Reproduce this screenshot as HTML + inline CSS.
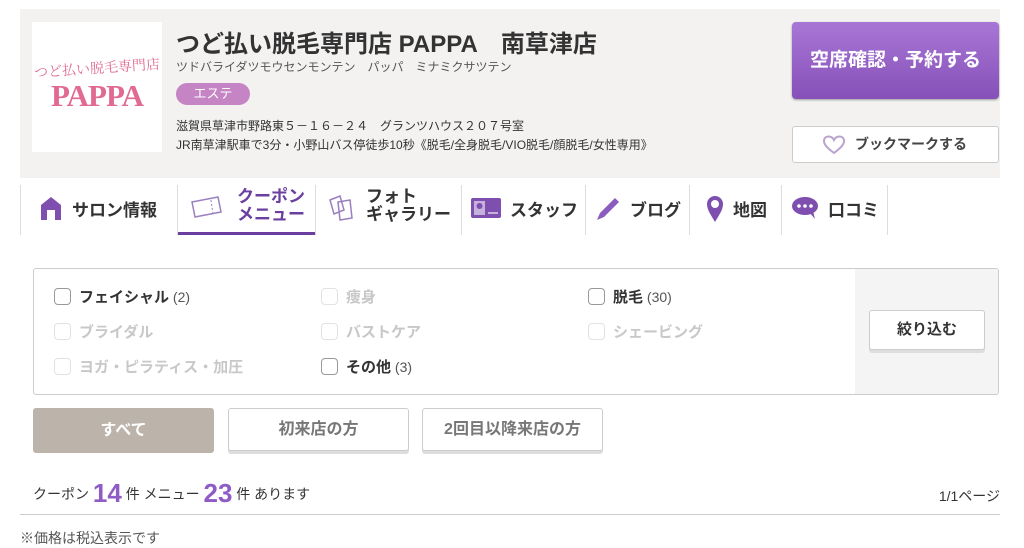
<!DOCTYPE html>
<html><head><meta charset="utf-8"><style>
*{box-sizing:border-box;margin:0;padding:0}
body{width:1024px;height:536px;overflow:hidden;background:#fff;font-family:"Liberation Sans","Noto Sans CJK JP",sans-serif;color:#333;position:relative}
.a{position:absolute}
.hdr{left:20px;top:9px;width:980px;height:169px;background:#f3f2f1}
.logo{left:32px;top:22px;width:130px;height:130px;background:#fff;text-align:center;color:#e06a92}
.b{font-weight:bold}
.cb{width:17px;height:17px;border:1px solid #999;border-radius:4px;background:#fff}
.cb.d{border-color:#e2e2e2}
.lbl{font-size:15px;font-weight:bold;color:#333;white-space:nowrap}
.lbl.d{color:#c8c8c8}
.lbl span{font-weight:normal;color:#555;font-size:14px}
.sep{width:1px;height:50px;background:#ddd;top:185px}
.nav{font-size:17px;font-weight:bold;color:#333;white-space:nowrap}
.btn{border:1px solid #ccc;border-radius:3px;background:#fff;box-shadow:0 3px 0 #ddd;text-align:center;font-weight:bold;color:#777;font-size:16px}
</style></head><body>
<div class="a hdr"></div>
<div class="a logo"><div style="margin-top:36px;font-size:14px;font-family:'Noto Serif CJK SC',serif;transform:rotate(-4deg)">つど払い脱毛専門店</div><div style="font-family:'Liberation Serif',serif;font-weight:bold;font-size:31px;letter-spacing:-1px;margin-top:0">PAPPA</div></div>
<div class="a b" style="left:176px;top:24px;font-size:24px;color:#333;white-space:nowrap">つど払い脱毛専門店 PAPPA　南草津店</div>
<div class="a" style="left:176px;top:58px;font-size:12px;color:#555;white-space:nowrap">ツドバライダツモウセンモンテン　パッパ　ミナミクサツテン</div>
<div class="a" style="left:176px;top:83px;width:74px;height:22px;border-radius:11px;background:#c584c4;color:#fff;font-size:13px;text-align:center;line-height:22px">エステ</div>
<div class="a" style="left:176px;top:117px;font-size:12px;color:#333;white-space:nowrap;line-height:19px">滋賀県草津市野路東５－１６－２４　グランツハウス２０７号室<br>JR南草津駅車で3分・小野山バス停徒歩10秒《脱毛/全身脱毛/VIO脱毛/顔脱毛/女性専用》</div>
<div class="a" style="left:792px;top:22px;width:207px;height:77px;border-radius:4px;background:linear-gradient(#a877d6,#8650b8);color:#fff;font-size:19px;font-weight:bold;text-align:center;line-height:77px;box-shadow:0 1px 2px #999">空席確認・予約する</div>
<div class="a" style="left:792px;top:126px;width:207px;height:37px;border:1px solid #ccc;border-radius:3px;background:#fff;font-size:14px;font-weight:bold;color:#444;line-height:35px;padding-left:62px">ブックマークする</div>
<svg class="a" style="left:822px;top:135px" width="24" height="20" viewBox="0 0 24 20"><path d="M12 18 C4 12 2 9 2 6 C2 3 4 1.5 6.5 1.5 C9 1.5 11 3 12 5 C13 3 15 1.5 17.5 1.5 C20 1.5 22 3 22 6 C22 9 20 12 12 18Z" fill="none" stroke="#b9a3cf" stroke-width="2"/></svg>

<div class="a sep" style="left:20px"></div><div class="a sep" style="left:177px"></div><div class="a sep" style="left:315px"></div><div class="a sep" style="left:461px"></div><div class="a sep" style="left:585px"></div><div class="a sep" style="left:689px"></div><div class="a sep" style="left:781px"></div><div class="a sep" style="left:887px"></div>
<div class="a" style="left:178px;top:232px;width:137px;height:3px;background:#6b3fa0"></div>
<svg class="a" style="left:40px;top:196px" width="22" height="25"><path d="M1 24V9L11 1L21 9V24H15V14H7V24Z" fill="#7e4fae"/></svg>
<div class="a nav" style="left:72px;top:196px">サロン情報</div>
<svg class="a" style="left:190px;top:194px" width="34" height="26"><path d="M2 8L28 3L31 18L5 23Z" fill="none" stroke="#9a80bf" stroke-width="1.5"/><path d="M21 6L23 20" stroke="#9a80bf" stroke-dasharray="2 2"/></svg>
<div class="a nav" style="left:237px;top:188px;color:#6b3fa0;line-height:18px">クーポン<br>メニュー</div>
<svg class="a" style="left:328px;top:194px" width="26" height="28"><path d="M2 6L12 2L16 16L6 20Z M10 8L22 6L24 24L12 26Z" fill="#fff" stroke="#9a80bf" stroke-width="1.5"/></svg>
<div class="a nav" style="left:366px;top:188px;line-height:18px">フォト<br>ギャラリー</div>
<svg class="a" style="left:470px;top:196px" width="32" height="24"><rect x="1" y="2" width="30" height="20" rx="2" fill="#7e4fae"/><rect x="4" y="5" width="11" height="14" fill="#c5b1dc"/><circle cx="9.5" cy="10" r="3" fill="#7e4fae"/><rect x="18" y="16" width="10" height="2" fill="#c5b1dc"/></svg>
<div class="a nav" style="left:510px;top:196px">スタッフ</div>
<svg class="a" style="left:595px;top:196px" width="26" height="26"><path d="M20 2L24 6L9 21L2 24L5 17Z" fill="#8a5cc0"/></svg>
<div class="a nav" style="left:630px;top:196px">ブログ</div>
<svg class="a" style="left:706px;top:195px" width="18" height="28"><path d="M9 27C5 20 1 15 1 9A8 8 0 0 1 17 9C17 15 13 20 9 27Z" fill="#7e4fae"/><circle cx="9" cy="9" r="4" fill="#fff"/></svg>
<div class="a nav" style="left:733px;top:196px">地図</div>
<svg class="a" style="left:791px;top:196px" width="30" height="24"><ellipse cx="14" cy="10" rx="13" ry="9" fill="#7e4fae"/><path d="M18 16L24 23L22 15Z" fill="#7e4fae"/><circle cx="8" cy="10" r="1.8" fill="#fff"/><circle cx="14" cy="10" r="1.8" fill="#fff"/><circle cx="20" cy="10" r="1.8" fill="#fff"/></svg>
<div class="a nav" style="left:828px;top:196px">口コミ</div>

<div class="a" style="left:33px;top:268px;width:966px;height:127px;border:1px solid #ccc;border-radius:3px;background:#fff;overflow:hidden"><div style="position:absolute;left:821px;top:0;width:145px;height:127px;background:#f4f4f4"></div></div>
<div class="a cb" style="left:54px;top:288px"></div><div class="a lbl" style="left:79px;top:286px">フェイシャル<span> (2)</span></div>
<div class="a cb d" style="left:321px;top:288px"></div><div class="a lbl d" style="left:346px;top:286px">痩身</div>
<div class="a cb" style="left:588px;top:288px"></div><div class="a lbl" style="left:613px;top:286px">脱毛<span> (30)</span></div>
<div class="a cb d" style="left:54px;top:323px"></div><div class="a lbl d" style="left:79px;top:321px">ブライダル</div>
<div class="a cb d" style="left:321px;top:323px"></div><div class="a lbl d" style="left:346px;top:321px">バストケア</div>
<div class="a cb d" style="left:588px;top:323px"></div><div class="a lbl d" style="left:613px;top:321px">シェービング</div>
<div class="a cb d" style="left:54px;top:358px"></div><div class="a lbl d" style="left:79px;top:356px">ヨガ・ピラティス・加圧</div>
<div class="a cb" style="left:321px;top:358px"></div><div class="a lbl" style="left:346px;top:356px">その他<span> (3)</span></div>
<div class="a btn" style="left:869px;top:310px;width:116px;height:40px;line-height:38px;color:#333;font-size:15px">絞り込む</div>

<div class="a" style="left:33px;top:408px;width:181px;height:45px;border-radius:3px;background:#bcb3aa;color:#fff;font-weight:bold;font-size:16px;text-align:center;line-height:45px">すべて</div>
<div class="a btn" style="left:228px;top:408px;width:181px;height:43px;line-height:41px">初来店の方</div>
<div class="a btn" style="left:422px;top:408px;width:181px;height:43px;line-height:41px">2回目以降来店の方</div>

<div class="a" style="left:33px;top:478px;font-size:14px;color:#333;white-space:nowrap">クーポン <b style="font-size:26px;color:#8f5cc6;vertical-align:-3px">14</b> 件 メニュー <b style="font-size:26px;color:#8f5cc6;vertical-align:-3px">23</b> 件 あります</div>
<div class="a" style="right:24px;top:486px;font-size:14px;color:#333">1/1ページ</div>
<div class="a" style="left:20px;top:514px;width:980px;height:1px;background:#ccc"></div>
<div class="a" style="left:20px;top:528px;font-size:14px;color:#555">※価格は税込表示です</div>
</body></html>
